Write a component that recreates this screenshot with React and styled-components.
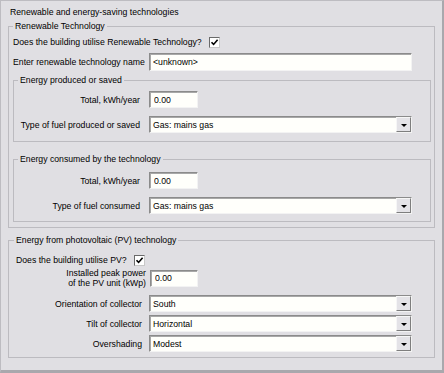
import React from "react";
import styled, { createGlobalStyle } from "styled-components";

const GlobalStyle = createGlobalStyle`
  html, body {
    margin: 0;
    padding: 0;
    background: #e0dfe3;
  }
  body {
    font-family: "Liberation Sans", Arial, sans-serif;
    font-size: 8.7px;
    color: #000;
  }
`;

const Frame = styled.div`
  width: 444px;
  height: 373px;
  box-sizing: border-box;
  border: 1px solid #bdbcc1;
  border-right: 2px solid #a9a8ad;
  border-bottom: 3px solid #a9a8ad;
  padding: 5px 7px 0 7px;
  background: #e0dfe3;
`;

const Title = styled.div`
  line-height: 12px;
  padding-left: 2px;
`;

const Group = styled.fieldset`
  margin: ${props => props.$mt}px 0 0;
  padding: ${props => props.$pad};
  border: 1px solid #bcbbc0;
  min-width: 0;
`;

const Legend = styled.legend`
  padding: 0 2px;
  margin-left: ${props => props.$shift || 0}px;
  line-height: 12px;
  font-size: 8.7px;
`;

const CheckRow = styled.div`
  display: flex;
  align-items: center;
  gap: 7px;
  height: 14px;
  line-height: 12px;
`;

const Row = styled.div`
  display: flex;
  align-items: center;
  gap: ${props => props.$gap}px;
  height: ${props => props.$h || 17}px;
  margin-top: ${props => props.$mt || 0}px;
`;

const Label = styled.div`
  flex: 0 0 ${props => props.$w}px;
  text-align: ${props => props.$align || "right"};
  line-height: ${props => props.$lh || 12}px;
  white-space: nowrap;
`;

const TextBox = styled.input`
  box-sizing: border-box;
  width: ${props => props.$w}px;
  height: ${props => props.$h || 17}px;
  margin: 0;
  padding: 0 0 0 ${props => props.$pl || 4}px;
  background: #fffffb;
  border: 1px solid;
  border-color: #8b8b8b #f3f3f3 #f3f3f3 #8b8b8b;
  box-shadow: inset 1px 1px 0 #a8a8a8;
  font-family: "Liberation Sans", Arial, sans-serif;
  font-size: 8.7px;
  color: #000;
  outline: none;
`;

const Combo = styled.div`
  box-sizing: border-box;
  width: 263px;
  height: 17px;
  display: flex;
  align-items: stretch;
  background: #fffffb;
  border: 1px solid;
  border-color: #8b8b8b #f3f3f3 #f3f3f3 #8b8b8b;
  box-shadow: inset 1px 1px 0 #a8a8a8;
`;

const ComboValue = styled.div`
  flex: 1;
  display: flex;
  align-items: center;
  padding-left: 3px;
  white-space: nowrap;
`;

const ComboButton = styled.div`
  box-sizing: border-box;
  width: 15px;
  display: flex;
  align-items: center;
  justify-content: center;
  background: #e4e3e7;
  border: 1px solid;
  border-color: #f6f6f6 #7e7e7e #7e7e7e #f6f6f6;
`;

const Arrow = styled.span`
  width: 0;
  height: 0;
  border-left: 3px solid transparent;
  border-right: 3px solid transparent;
  border-top: 3px solid #000;
  margin-top: 1px;
`;

const Box = styled.span`
  box-sizing: border-box;
  width: 11px;
  height: 11px;
  flex: 0 0 11px;
  background: #fff;
  border: 1px solid;
  border-color: #6a6a6a #c8c8c8 #c8c8c8 #6a6a6a;
  display: flex;
  align-items: center;
  justify-content: center;
`;

const CheckBox = () => (
  <Box>
    <svg width="9" height="9" viewBox="0 0 9 9">
      <path d="M1.5 4.2 L3.6 6.4 L7.6 1.8" fill="none" stroke="#000" strokeWidth="1.6" />
    </svg>
  </Box>
);

const Select = ({ value }) => (
  <Combo>
    <ComboValue>{value}</ComboValue>
    <ComboButton>
      <Arrow />
    </ComboButton>
  </Combo>
);

const EnergyGroup = ({ title, fuelLabel, mt, pad }) => (
  <Group $mt={mt} $pad={pad}>
    <Legend>{title}</Legend>
    <Row $gap={9}>
      <Label $w={122}>Total, kWh/year</Label>
      <TextBox $w={49} defaultValue="0.00" readOnly />
    </Row>
    <Row $gap={9} $mt={8}>
      <Label $w={122}>{fuelLabel}</Label>
      <Select value="Gas: mains gas" />
    </Row>
  </Group>
);

const App = () => (
  <>
    <GlobalStyle />
    <Frame>
      <Title>Renewable and energy-saving technologies</Title>
      <Group $mt={2} $pad="3px 3px 5px 4px">
        <Legend>Renewable Technology</Legend>
        <CheckRow>
          <span>Does the building utilise Renewable Technology?</span>
          <CheckBox />
        </CheckRow>
        <Row $gap={0} $h={18} $mt={4}>
          <Label $w={136} $align="left">
            Enter renewable technology name
          </Label>
          <TextBox $w={263} $h={18} $pl={3} defaultValue="<unknown>" readOnly />
        </Row>
        <EnergyGroup
          title="Energy produced or saved"
          fuelLabel="Type of fuel produced or saved"
          mt={3}
          pad="5px 0 8px 4px"
        />
        <EnergyGroup
          title="Energy consumed by the technology"
          fuelLabel="Type of fuel consumed"
          mt={11}
          pad="7px 0 7px 4px"
        />
      </Group>
      <Group $mt={6} $pad="7px 3px 5px 7px">
        <Legend $shift={-2}>Energy from photovoltaic (PV) technology</Legend>
        <CheckRow>
          <span>Does the building utilise PV?</span>
          <CheckBox />
        </CheckRow>
        <Row $gap={4} $h={20} $mt={1}>
          <Label $w={130} $lh={10}>
            Installed peak power
            <br />
            of the PV unit (kWp)
          </Label>
          <TextBox $w={48} defaultValue="0.00" readOnly />
        </Row>
        <Row $gap={7} $mt={7}>
          <Label $w={126}>Orientation of collector</Label>
          <Select value="South" />
        </Row>
        <Row $gap={7} $mt={3}>
          <Label $w={126}>Tilt of collector</Label>
          <Select value="Horizontal" />
        </Row>
        <Row $gap={7} $mt={3}>
          <Label $w={126}>Overshading</Label>
          <Select value="Modest" />
        </Row>
      </Group>
    </Frame>
  </>
);

export default App;
